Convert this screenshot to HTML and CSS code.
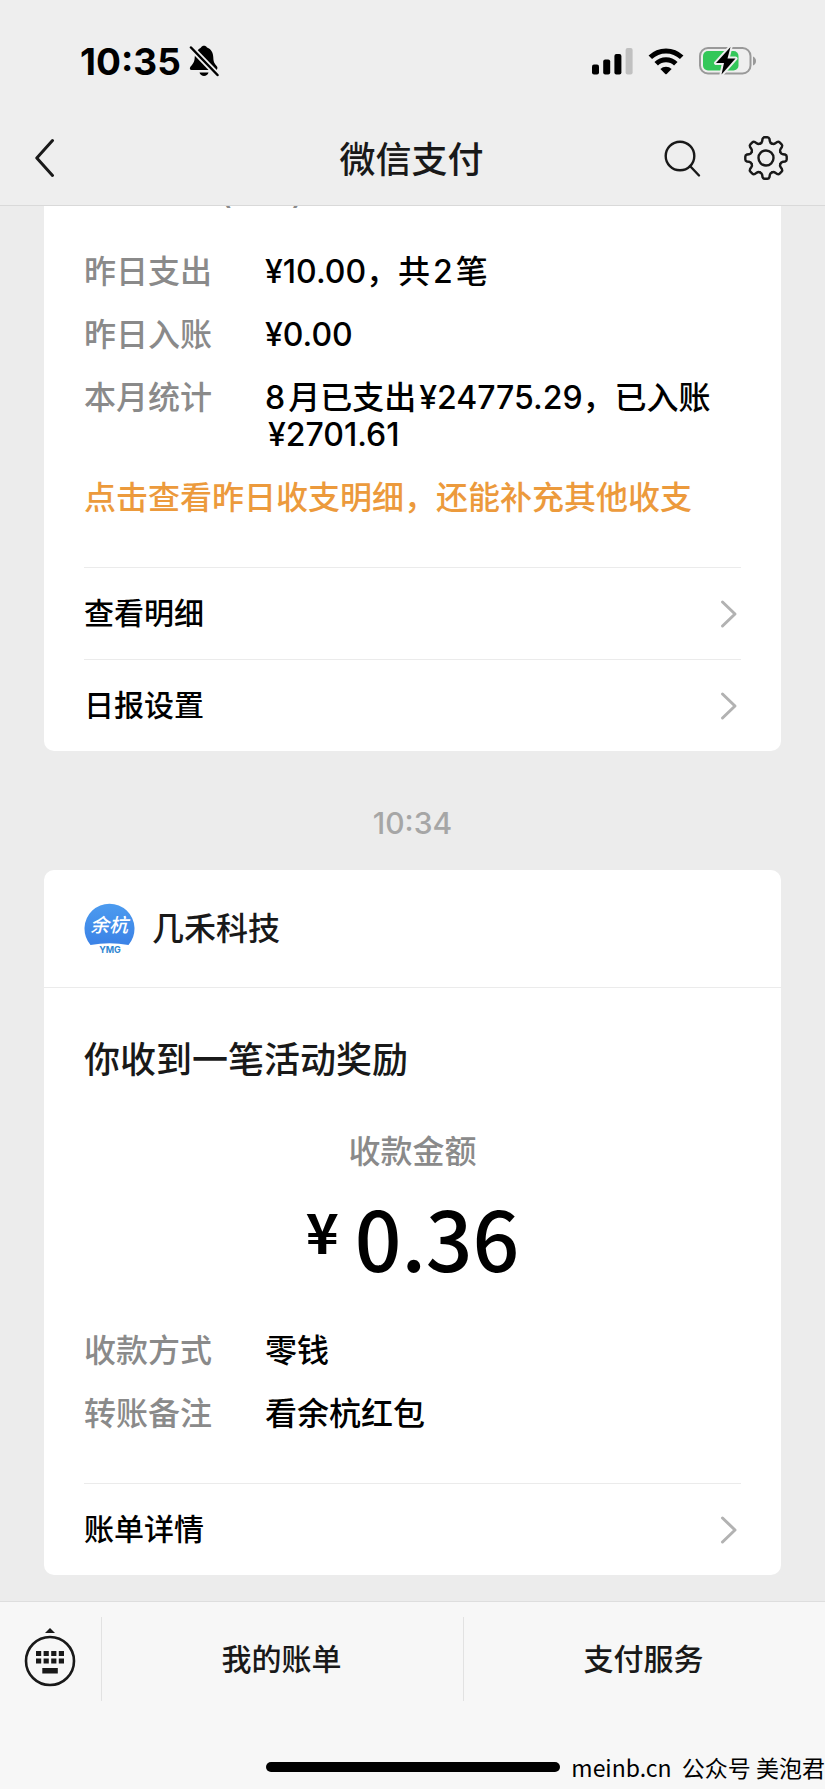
FILE: index.html
```html
<!DOCTYPE html>
<html lang="zh-CN">
<head>
<meta charset="utf-8">
<meta name="viewport" content="width=device-width, initial-scale=1">
<title>微信支付</title>
<link rel="stylesheet" href="styles.css">
</head>
<body>
<div class="app">
  <header class="header">
    <div class="status">
      <div class="status-left">
        <span class="clock">10:35</span>
        <svg class="bell" width="30" height="32" viewBox="0 0 30 32" aria-hidden="true">
          <path d="M9 5C10.200 3.500 11.300 3 12 2.500C13 .3 17 .3 18 2.500C22.500 4 24.200 8 24.300 12.500C24.400 17.500 26 19 28 21.500C28.800 22.800 28.400 24 27.500 25H2.500C.8 25 .4 23.300 1.400 21.800C3.500 19.300 5.500 17.500 5.700 12.500C5.800 9.500 7 6.500 9 5Z"/>
          <path d="M10.500 27.500H19.500C18.500 32 11.500 32 10.500 27.500Z"/>
          <path class="bell-gap" d="M2 2.500L28.500 30"/>
          <path class="bell-slash" d="M2 2.500L28.500 30"/>
        </svg>
      </div>
      <div class="status-right">
        <svg width="41" height="27" viewBox="0 0 41 27" aria-hidden="true">
          <rect x="0" y="16.500" width="7" height="10" rx="2"/>
          <rect x="11.200" y="11.500" width="7" height="15" rx="2"/>
          <rect x="22.400" y="6" width="7" height="20.500" rx="2"/>
          <rect x="33.600" y="0" width="7" height="26.500" rx="2" fill="#c0c0c0"/>
        </svg>
        <svg width="36" height="27" viewBox="0 0 36 27" aria-hidden="true">
          <g fill="none" stroke="#000" stroke-width="5">
            <path d="M2.300 9.300A22.500 22.500 0 0 1 33.700 9.300"/>
            <path d="M8.200 15.800A14 14 0 0 1 27.800 15.800"/>
          </g>
          <path d="M12.400 21A8 8 0 0 1 23.600 21L18.700 26Q18 26.600 17.300 26Z"/>
        </svg>
        <svg width="58" height="30" viewBox="0 0 58 30" aria-hidden="true">
          <rect x="1" y="2" width="50.500" height="25.500" rx="8" fill="none" stroke="#999" stroke-width="2"/>
          <path d="M54 10.500Q57 12 57 15T54 19.500Z" fill="#999"/>
          <rect x="4" y="5" width="35.500" height="19.500" rx="5" fill="#34c759"/>
          <path d="M31.500 1L17 17H25L22.500 28.500L36.500 12.500H28.500Z" stroke="#eee" stroke-width="4" stroke-linejoin="round"/>
          <path d="M31.500 1L17 17H25L22.500 28.500L36.500 12.500H28.500Z"/>
        </svg>
      </div>
    </div>
    <nav class="nav">
      <button class="icon-button" type="button" aria-label="返回">
        <svg width="20" height="40" viewBox="0 0 20 40"><path class="line line-back" d="M17.500 2.500L1.800 20L17.500 37.500"/></svg>
      </button>
      <h1 class="nav-title">微信支付</h1>
      <div class="nav-actions">
        <button class="icon-button" type="button" aria-label="搜索">
          <svg width="44" height="44" viewBox="0 0 44 44"><circle class="line" cx="20" cy="20" r="14.300"/><path class="line" d="M30 30L39 39.500"/></svg>
        </button>
        <button class="icon-button" type="button" aria-label="设置">
          <svg width="44" height="44" viewBox="-22 -22 44 44">
            <defs><path id="tooth" class="line" d="M-5.900-14.300Q-4.100-15-3.800-17L-3.500-19Q-2.900-20.700-1.400-20.700H1.400Q2.900-20.700 3.500-19L3.800-17Q4.100-15 5.900-14.300"/></defs>
            <use href="#tooth"/><use href="#tooth" transform="rotate(45)"/><use href="#tooth" transform="rotate(90)"/><use href="#tooth" transform="rotate(135)"/><use href="#tooth" transform="rotate(180)"/><use href="#tooth" transform="rotate(225)"/><use href="#tooth" transform="rotate(270)"/><use href="#tooth" transform="rotate(315)"/>
            <circle class="line" r="7.500"/>
          </svg>
        </button>
      </div>
    </nav>
  </header>

  <main class="feed">
    <article class="card card-cut">
      <div class="card-body">
        <p class="cut-line"><span>(</span><span>)</span></p>
        <dl class="facts">
          <div class="fact"><dt>昨日支出</dt><dd>¥10.00，共<span class="num-start num-end">2</span>笔</dd></div>
          <div class="fact"><dt>昨日入账</dt><dd>¥0.00</dd></div>
          <div class="fact"><dt>本月统计</dt><dd><span class="num-end">8</span>月已支出<span class="num-start">¥24775.29</span>，已入账<span class="num-start">¥2701.61</span></dd></div>
        </dl>
        <p class="hint">点击查看昨日收支明细，还能补充其他收支</p>
      </div>
      <div class="links">
        <a class="link" href="#detail">查看明细<svg class="chevron" width="18" height="30" viewBox="0 0 18 30"><path d="M2.500 3L15 15L2.500 27"/></svg></a>
        <a class="link" href="#daily">日报设置<svg class="chevron" width="18" height="30" viewBox="0 0 18 30"><path d="M2.500 3L15 15L2.500 27"/></svg></a>
      </div>
    </article>

    <time class="stamp">10:34</time>

    <article class="card">
      <header class="merchant">
        <svg width="52" height="52" viewBox="0 0 52 52" role="img" aria-label="余杭 YMG">
          <defs><linearGradient id="sky" x1="0" y1="0" x2="0" y2="1"><stop offset="0" stop-color="#4c9bef"/><stop offset="1" stop-color="#3b82e6"/></linearGradient></defs>
          <path d="M6.500 42A25 25 0 1 1 44.500 42Q25.500 38.500 6.500 42Z" fill="url(#sky)"/>
          <text class="logo-name" x="25" y="29" text-anchor="middle">余杭</text>
          <text class="logo-sub" x="26" y="50" text-anchor="middle">YMG</text>
        </svg>
        <span class="merchant-name">几禾科技</span>
      </header>
      <div class="card-body receipt">
        <h2 class="receipt-title">你收到一笔活动奖励</h2>
        <p class="amount-label">收款金额</p>
        <p class="amount"><span class="currency">¥</span><span>0.36</span></p>
        <dl class="facts">
          <div class="fact"><dt>收款方式</dt><dd>零钱</dd></div>
          <div class="fact"><dt>转账备注</dt><dd>看余杭红包</dd></div>
        </dl>
      </div>
      <div class="links">
        <a class="link" href="#bill">账单详情<svg class="chevron" width="18" height="30" viewBox="0 0 18 30"><path d="M2.500 3L15 15L2.500 27"/></svg></a>
      </div>
    </article>
  </main>

  <footer class="footer">
    <div class="tabs">
      <button class="tab-key" type="button" aria-label="键盘">
        <svg width="52" height="60" viewBox="0 0 52 60">
          <path d="M21 6L26 1L31 6Z" fill="#191919"/>
          <circle cx="26" cy="34" r="24" fill="none" stroke="#191919" stroke-width="2.600"/>
          <path d="M12 26.500H40M12 34H40" fill="none" stroke="#191919" stroke-width="5" stroke-dasharray="5.200 2.400"/>
          <rect x="18.300" y="41" width="15.500" height="5.500" fill="#191919"/>
        </svg>
      </button>
      <button class="tab" type="button">我的账单</button>
      <button class="tab" type="button">支付服务</button>
    </div>
    <div class="home-bar"></div>
    <p class="watermark">meinb.cn&nbsp; 公众号 美泡君</p>
  </footer>
</div>
</body>
</html>
```
FILE: styles.css
```css
* { box-sizing: border-box; }

body {
  margin: 0;
  background: #ececec;
  color: #000;
  font-family: Inter, "Noto Sans CJK SC", sans-serif;
  font-size: 32px;
  font-weight: 500;
  line-height: 37px;
}

h1, h2, p, dl, dd { margin: 0; font-weight: 500; }
button { padding: 0; border: 0; background: none; color: inherit; font: inherit; }
svg { display: block; flex: none; }

.app {
  display: flex;
  flex-direction: column;
  min-height: 100vh;
  overflow: hidden;
}

/* Status bar and navigation */
.header {
  padding-bottom: 11px;
  background: #eeeeee;
  border-bottom: 1px solid #d9d9d9;
}
.status {
  display: flex;
  justify-content: space-between;
  align-items: center;
  height: 122px;
  padding: 0 68px 0 80px;
}
.status-left { display: flex; align-items: center; gap: 8px; }
.status-right { display: flex; align-items: center; gap: 15px; }
.clock { font-size: 37px; font-weight: 700; }
.bell-gap { fill: none; stroke: #eeeeee; stroke-width: 6; }
.bell-slash { fill: none; stroke: #000; stroke-width: 2.5; stroke-linecap: round; }
.nav {
  display: grid;
  grid-template-columns: 1fr auto 1fr;
  align-items: center;
  height: 72px;
  padding: 0 37px 0 35px;
}
.nav-title { padding-top: 4px; color: #191919; font-size: 36px; }
.nav-actions { display: flex; justify-content: flex-end; gap: 40px; }
.icon-button { justify-self: start; }
.line { fill: none; stroke: #191919; stroke-width: 2.4; stroke-linecap: round; stroke-linejoin: round; }
.line-back { stroke-width: 3; }

/* Message cards */
.feed { flex: 1; padding: 0 44px 26px; overflow: hidden; }
.card { background: #fff; border-radius: 10px; }
.card-cut { border-top-left-radius: 0; border-top-right-radius: 0; }
.card-body { padding: 0 40px 51px; }
.cut-line {
  display: flex;
  gap: 60px;
  margin-top: -32px;
  padding-left: 136px;
  color: #8a8a8a;
}
.facts { display: grid; gap: 26px; }
.card-cut .facts { padding-top: 42px; }
.fact { display: grid; grid-template-columns: 181px 1fr; }
.fact dt { color: #8a8a8a; }
.num-start { padding-left: 3px; }
.num-end { padding-right: 3px; }
.hint { padding-top: 26px; color: #ec9a3c; }
.links { padding: 0 40px; }
.link {
  display: flex;
  justify-content: space-between;
  align-items: center;
  height: 92px;
  padding-right: 3px;
  border-top: 1px solid #ebebeb;
  color: #000;
  font-size: 30px;
  text-decoration: none;
}
.chevron { fill: none; stroke: #b2b2b2; stroke-width: 3; stroke-linecap: round; stroke-linejoin: round; }
.stamp {
  display: block;
  padding: 54px 0 28px;
  color: #a6a6a6;
  font-size: 30px;
  text-align: center;
}

.merchant {
  display: flex;
  align-items: center;
  gap: 16px;
  height: 118px;
  padding: 0 40px;
  border-bottom: 1px solid #ebebeb;
}
.merchant-name { color: #191919; }
.logo-name { fill: #fff; font-size: 19px; font-style: italic; }
.logo-sub { fill: #2e86d1; font-size: 9px; font-weight: 700; }
.receipt { padding-top: 54px; }
.receipt-title { color: #191919; font-size: 36px; }
.amount-label { padding-top: 54px; color: #8a8a8a; text-align: center; }
.amount {
  display: flex;
  justify-content: center;
  gap: 16px;
  padding: 26px 0 54px;
  font-family: "Noto Sans CJK SC", sans-serif;
  font-size: 82px;
  line-height: 82px;
}
.currency { font-size: 56px; font-weight: 700; line-height: 68px; }

/* Bottom menu */
.footer { position: relative; height: 188px; background: #f7f7f7; border-top: 1px solid #dedede; }
.tabs { display: grid; grid-template-columns: 101px 1fr 1fr; padding-top: 15px; }
.tab-key { display: flex; justify-content: center; align-items: center; padding: 0 2px 4px 0; }
.tab { height: 84px; padding-right: 2px; border-left: 1px solid #e2e2e2; color: #191919; font-size: 30px; }
.home-bar { width: 294px; height: 10px; margin: 61px auto 0; border-radius: 5px; background: #000; }
.watermark {
  position: absolute;
  right: 0;
  bottom: 3px;
  font-family: "Noto Sans CJK SC", sans-serif;
  font-size: 23px;
  font-weight: 400;
  white-space: nowrap;
}
```
